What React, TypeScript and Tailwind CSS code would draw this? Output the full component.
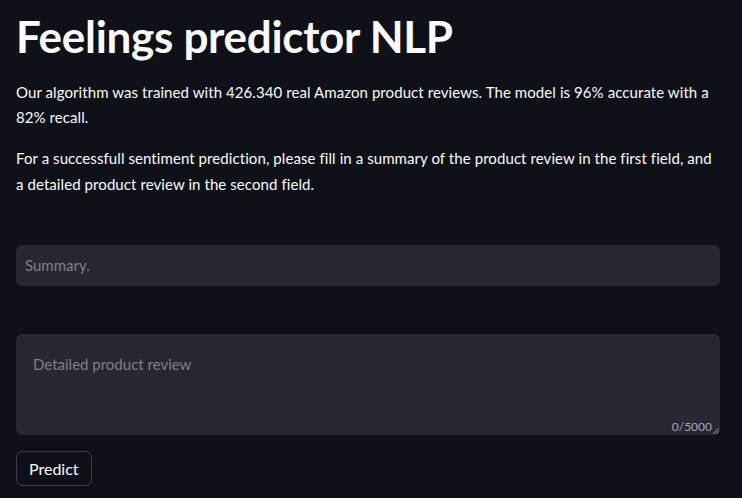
export default function App() {
  const font = { fontFamily: '"Lato", "Noto Sans", sans-serif' };
  return (
    <div className="min-h-[498px] w-full bg-[#0e1117] text-[#fafafa]" style={font}>
      <div className="pl-4 pr-[22px] pt-[10px]">
        <h1 className="text-[44px] font-bold leading-[52px] tracking-[-0.3px]">Feelings predictor NLP</h1>
        <p className="mt-[18px] text-[15px] leading-[25px] tracking-[0.08px]">
          Our algorithm was trained with 426.340 real Amazon product reviews. The model is 96% accurate with a 82% recall.
        </p>
        <p className="mt-[15px] text-[15px] leading-[26px] tracking-[0.08px]">
          For a successfull sentiment prediction, please fill in a summary of the product review in the first field, and a detailed product review in the second field.
        </p>
        <div className="mt-[48px] h-[41px] rounded-[6px] bg-[#262730] flex items-center px-[9px]">
          <span className="text-[15px] text-[#808189]">Summary.</span>
        </div>
        <div className="mt-[48px] relative h-[101px] rounded-[6px] bg-[#262730] px-[17px] pt-[18px]">
          <span className="text-[15px] text-[#808189]">Detailed product review</span>
          <div className="absolute right-[1px] bottom-[2px] flex items-end gap-[0px]">
            <span className="text-[12px] text-[#a3a8b8] leading-none">0/5000</span>
            <svg width="7" height="7" viewBox="0 0 7 7" className="mb-[-1px]">
              <path d="M1 7 L7 1 M4 7 L7 4" stroke="#9a9aa0" strokeWidth="1" />
            </svg>
          </div>
        </div>
        <button className="mt-[16px] h-[35px] px-[12px] rounded-[6px] border border-[#3c3e45] bg-[#0e1117] text-[16px] text-[#fafafa]">
          Predict
        </button>
      </div>
    </div>
  );
}
